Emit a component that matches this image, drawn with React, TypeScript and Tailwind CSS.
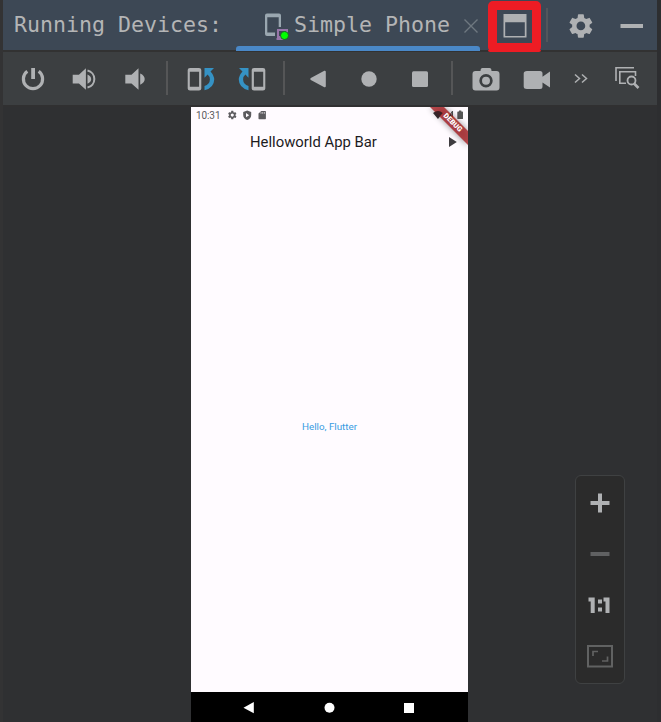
import type { ReactNode } from "react";

type GlyphProps = { x: number; y?: number; w: number; h?: number; className?: string; children: ReactNode };

/* An icon cell whose drawing uses window coordinates. */
function Glyph({ x, y = 52, w, h = 53, className = "", children }: GlyphProps) {
  return (
    <svg width={w} height={h} viewBox={`${x} ${y} ${w} ${h}`} className={`block shrink-0 ${className}`} fill="#afb1b3">
      {children}
    </svg>
  );
}

const GEAR =
  "M19.14 12.94c.04-.3.06-.61.06-.94 0-.32-.02-.64-.07-.94l2.03-1.58a.49.49 0 0 0 .12-.61l-1.92-3.32a.488.488 0 0 0-.59-.22l-2.39.96c-.5-.38-1.03-.7-1.62-.94l-.36-2.54a.484.484 0 0 0-.48-.41h-3.84c-.24 0-.43.17-.47.41l-.36 2.54c-.59.24-1.13.57-1.62.94l-2.39-.96c-.22-.08-.47 0-.59.22L2.74 8.87c-.12.21-.08.47.12.61l2.03 1.58c-.05.3-.09.63-.09.94s.02.64.07.94l-2.03 1.58a.49.49 0 0 0-.12.61l1.92 3.32c.12.22.37.29.59.22l2.39-.96c.5.38 1.03.7 1.62.94l.36 2.54c.05.24.24.41.48.41h3.84c.24 0 .44-.17.47-.41l.36-2.54c.59-.24 1.13-.56 1.62-.94l2.39.96c.22.08.47 0 .59-.22l1.92-3.32c.12-.22.07-.47-.12-.61l-2.01-1.58zM12 15.6c-1.98 0-3.6-1.62-3.6-3.6s1.62-3.6 3.6-3.6 3.6 1.62 3.6 3.6-1.62 3.6-3.6 3.6z";

function Header() {
  return (
    <header className="flex h-[50px] shrink-0 bg-[#3d4855] font-['DejaVu_Sans_Mono',monospace] text-[21.6px] leading-[49px] text-[#b4b5b6]">
      <span className="ml-[11px] w-[208px] whitespace-pre">Running Devices:</span>
      <div className="flex h-[50px] w-[258px] flex-col pl-[14px]">
        <div className="flex h-[46px]">
          <Glyph x={236} y={0} w={58} h={46}>
            <path fill="#9aa7b0" fillRule="evenodd" d="M267 13.5h12q2 0 2 2V27h-2.3V17.300H267.300V32.500H275V36h-8q-2 0-2-2V15.500q0-2 2-2z" />
            <path fill="none" stroke="#9876aa" strokeWidth="2" d="M278 37v-7h9v7zM276.500 39h7" />
            <circle cx="284.500" cy="35.500" r="4" fill="#0f0" stroke="#224c2a" strokeWidth=".8" />
          </Glyph>
          <span className="w-[156px] whitespace-pre">Simple Phone</span>
          <Glyph x={450} y={0} w={30} h={46}>
            <path stroke="#6e7880" strokeWidth="1.4" d="m464.500 19.500 13 13m0-13-13 13" />
          </Glyph>
        </div>
        <div className="h-[4px] shrink-0 rounded-t-[3px] bg-[#4a88c7]" />
      </div>
      <div className="mt-px ml-[8px] h-[51px] w-[53px] shrink-0 rounded-[5px] border-[9px] border-[#ed1c24] bg-[#3d4855]">
        <Glyph x={497} y={10} w={35} h={33}>
          <path fillRule="evenodd" d="M503.500 14h23v23.500h-23zm1.700 8.300v13.600h19.600v-13.600z" />
        </Glyph>
      </div>
      <Glyph x={541} y={0} w={116} h={50}>
        <path fill="#51565b" d="M546 8h2v34h-2z" />
        <path transform="translate(566.3 11.400) scale(1.215)" d={GEAR} />
        <path d="M620.500 24H643v4h-22.500z" />
      </Glyph>
    </header>
  );
}

function Rule({ x, w }: { x: number; w: number }) {
  return (
    <Glyph x={x} w={w}>
      <path fill="#555657" d={`M${x + w / 2 - 1} 61h2v34h-2z`} />
    </Glyph>
  );
}

function PhoneRotate() {
  return (
    <>
      <path fillRule="evenodd" d="M190 68h9q2.300 0 2.300 2v18.500q0 2-2.300 2h-9q-2.300 0-2.300-2V70q0-2 2.300-2zm-.2 3.800v14.900h9.300V71.800z" />
      <path fill="#3592c4" d="M204.500 68h9.500l-3.500 3.500q3.700 3.800 3.700 8.300-.2 8.200-9.700 10.400v-4.300q5.300-1.900 5.400-6.500 0-3.200-2.300-5l-3.100 3.400z" />
    </>
  );
}

function Toolbar() {
  return (
    <div className="flex h-[53px] shrink-0 bg-[#3c3f41]">
      <Glyph x={3} w={55}>
        <path d="M31.200 68h3.800v11h-3.800z" />
        <path fill="none" stroke="#afb1b3" strokeWidth="3.200" d="M27.300 71.300a9.600 9.600 0 1 0 11.400 0" />
      </Glyph>
      <Glyph x={58} w={54}>
        <path d="M72.700 74.800h6.200l7-6.500v21.500l-7-6.300h-6.200zM87.500 74.500q3.700 1.600 3.700 4.600t-3.700 4.700z" />
        <path fill="none" stroke="#afb1b3" strokeWidth="2" d="M87.500 70.600a8.700 8.700 0 0 1 0 17" />
      </Glyph>
      <Glyph x={112} w={45}>
        <path d="M125.300 74.800h6.200l7-6.500v21.500l-7-6.300h-6.200zM140.200 73.500q4.500 2 4.500 5.600t-4.500 5.700z" />
      </Glyph>
      <Rule x={157} w={20} />
      <Glyph x={177} w={50}><PhoneRotate /></Glyph>
      <Glyph x={227} w={47}>
        <g transform="translate(453 0) scale(-1 1)"><PhoneRotate /></g>
      </Glyph>
      <Rule x={274} w={20} />
      <Glyph x={294} w={50}><path stroke="#afb1b3" strokeWidth="2" strokeLinejoin="round" d="m311.300 79 13.500-7.300v14.600z" /></Glyph>
      <Glyph x={344} w={50}><circle cx="369" cy="79" r="7.700" /></Glyph>
      <Glyph x={394} w={48}><rect x="412" y="71.300" width="16" height="15.600" rx="1.500" /></Glyph>
      <Rule x={442} w={20} />
      <Glyph x={462} w={49}>
        <path fillRule="evenodd" d="M482.500 68h7q2 0 2 3h5q3 0 3 3v13.500q0 3-3 3h-21q-3 0-3-3V74q0-3 3-3h5q0-3 2-3zm3.500 6a6.700 6.700 0 1 0 0 13.400 6.700 6.700 0 0 0 0-13.400z" />
        <circle cx="486" cy="80.700" r="4" />
      </Glyph>
      <Glyph x={511} w={51}><path d="M527 71h13q2.500 0 2.500 2.500v3.300l7.500-5.300v16l-7.500-5v4q0 2.500-2.500 2.500h-13q-3.300 0-3.300-2.500v-13q0-2.500 3.300-2.500z" /></Glyph>
      <Glyph x={562} w={40}><path fill="none" stroke="#afb1b3" strokeWidth="1.500" d="m575 74.500 4.500 4-4.500 4m7-8 4.500 4-4.500 4" /></Glyph>
      <Glyph x={602} w={55}>
        <path fill="none" stroke="#afb1b3" strokeWidth="1.600" d="M616 81V67.800h18M626 83.300h-6.200V71.800h15.700V76" />
        <circle cx="631.500" cy="80.500" r="4" fill="none" stroke="#afb1b3" strokeWidth="1.800" />
        <path stroke="#afb1b3" strokeWidth="2.600" d="m634 83.500 4.500 4.500" />
      </Glyph>
    </div>
  );
}

function Phone() {
  return (
    <div className="flex w-[277px] shrink-0 flex-col overflow-hidden bg-[#fffbff] font-[Roboto,sans-serif]">
      <div className="flex h-[17px] items-center text-[#5c5b5e]">
        <span className="ml-[5px] w-[31px] text-[10px] leading-[17px] tracking-[-0.1px]">10:31</span>
        <Glyph x={227} y={107} w={43} h={17}>
          <g fill="#5c5b5e">
            <path transform="translate(227 109.800) scale(.44)" d={GEAR} />
            <path fillRule="evenodd" d="m247.200 110.400 4 1.500v3q0 3.500-4 5.200-4-1.700-4-5.200v-3zm-1.200 2.700v4.200l3.200-2.100z" />
            <path d="M261.300 111h4q.6 0 .6.600v7q0 .600-.6.600h-6.200q-.6 0-.6-.600v-5z" />
          </g>
          <path stroke="#fffbff" strokeWidth=".6" d="M261 112v1.800m1.700-1.800v1.800m1.700-1.800v1.800" />
        </Glyph>
      </div>
      <div className="flex h-[36px]">
        <h1 className="ml-[59px] w-[129px] whitespace-nowrap text-[14.85px] leading-[36px] text-[#1d1b1e]">Helloworld App Bar</h1>
        {/* Status symbols lie under the diagonal debug ribbon, which spans both bars. */}
        <Glyph x={379} y={107} w={89} h={53} className="-mt-[17px]">
          <path fill="#555" d="M433 113q5-4 10 0l-5 6zM458 111.500h1v-1h2.300v1h1q.7 0 .7.700v6.200q0 .7-.7.700H458q-.7 0-.7-.7v-6.200q0-.7.7-.7z" />
          <path fill="none" stroke="#555" d="M452.500 111v8h-5z" />
          <path fill="#3f3c40" d="m449 137 7.800 5-7.800 5z" />
          <defs>
            <filter id="ribbonShadow" x="-50%" y="-50%" width="200%" height="200%"><feGaussianBlur stdDeviation="3" /></filter>
          </defs>
          <path fill="#000" opacity=".4" filter="url(#ribbonShadow)" d="M430 107h14l24 24v15z" />
          <path fill="#a82024" opacity=".8" d="M430 107h14l24 24v14z" />
          <path fill="#2e2024" opacity=".85" d="M433.500 113q4.500-4 9 0l-4.700 5.500zM451.500 113v5h-4z" />
          <text transform="translate(452.600 122.800) rotate(45)" textAnchor="middle" dominantBaseline="middle" fill="#fff" fontSize="7.200" fontWeight="900" fontFamily="Roboto, sans-serif">DEBUG</text>
        </Glyph>
      </div>
      <main className="flex grow items-center justify-center text-[9.800px] leading-3 text-[#389be2]">
        <span className="mt-px">Hello, Flutter</span>
      </main>
      <nav className="h-[30px] shrink-0 bg-black">
        <Glyph x={191} y={692} w={277} h={30}>
          <g fill="#fff">
            <path d="m243.500 707.700 10.300-5.700v11.300z" />
            <circle cx="329.500" cy="707.800" r="5" />
            <path d="M404 703h10v10h-10z" />
          </g>
        </Glyph>
      </nav>
    </div>
  );
}

function ZoomControls() {
  return (
    <div className="mt-[368px] ml-[107px] h-[209px] w-[50px] shrink-0 rounded-[6px] border border-[#3f4142] bg-[#2b2b2b]">
      <Glyph x={576} y={476} w={48} h={207}>
        <path d="M598 493.500h4v7.500h7.500v4H602v7.500h-4V505h-7.500v-4h7.500z" />
        <path fill="#606162" d="M590.500 552h19v4h-19z" />
        <path d="M588.500 597.500h6.200v15.500h-4v-11.500h-2.200zM603.500 597.500h6v15.500h-4v-11.500h-2zM598 599.500h4v4h-4zM598 607.500h4v4h-4z" />
        <path fill="none" stroke="#616262" strokeWidth="2" d="M588 646h24v20.500h-24z" />
        <path fill="none" stroke="#616262" strokeWidth="1.700" d="M593 656v-4.500h5M607.500 656.500v4.500H602" />
      </Glyph>
    </div>
  );
}

export default function App() {
  return (
    <div className="flex h-[722px] w-[661px] overflow-hidden bg-[#323232]">
      <div className="w-[3px] shrink-0 bg-[#333334]" />
      <div className="flex w-[654px] shrink-0 flex-col">
        <Header />
        <div className="flex h-[2px] shrink-0 bg-[#323232]">
          <div className="ml-[233px] h-px w-[244px] bg-[#4a88c7]" />
          <div className="ml-[8px] h-[2px] w-[53px] rounded-b-[5px] bg-[#ed1c24]" />
        </div>
        <Toolbar />
        <div className="h-[2px] shrink-0 bg-[#303031]" />
        <div className="flex grow bg-[#2f3032] pl-[188px]">
          <Phone />
          <ZoomControls />
        </div>
      </div>
      <div className="w-[4px] shrink-0 bg-[#2d2e30]" />
    </div>
  );
}
